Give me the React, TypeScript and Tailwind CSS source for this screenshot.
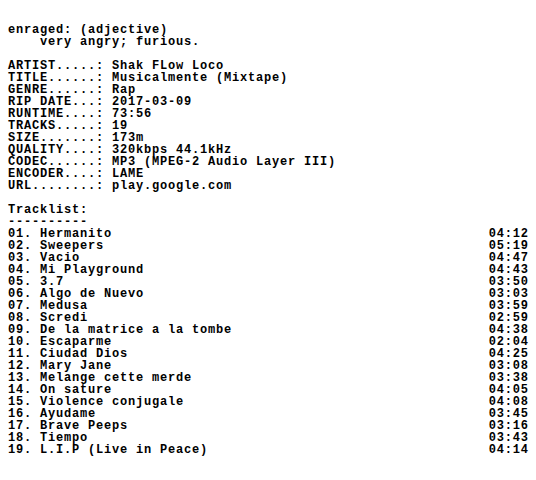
const definition = ["enraged: (adjective)", "    very angry; furious."];

const info: [string, string][] = [
  ["ARTIST.....", "Shak FLow Loco"],
  ["TITLE......", "Musicalmente (Mixtape)"],
  ["GENRE......", "Rap"],
  ["RIP DATE...", "2017-03-09"],
  ["RUNTIME....", "73:56"],
  ["TRACKS.....", "19"],
  ["SIZE.......", "173m"],
  ["QUALITY....", "320kbps 44.1kHz"],
  ["CODEC......", "MP3 (MPEG-2 Audio Layer III)"],
  ["ENCODER....", "LAME"],
  ["URL........", "play.google.com"],
];

const tracks: [string, string][] = [
  ["Hermanito", "04:12"],
  ["Sweepers", "05:19"],
  ["Vacio", "04:47"],
  ["Mi Playground", "04:43"],
  ["3.7", "03:50"],
  ["Algo de Nuevo", "03:03"],
  ["Medusa", "03:59"],
  ["Scredi", "02:59"],
  ["De la matrice a la tombe", "04:38"],
  ["Escaparme", "02:04"],
  ["Ciudad Dios", "04:25"],
  ["Mary Jane", "03:08"],
  ["Melange cette merde", "03:38"],
  ["On sature", "04:05"],
  ["Violence conjugale", "04:08"],
  ["Ayudame", "03:45"],
  ["Brave Peeps", "03:16"],
  ["Tiempo", "03:43"],
  ["L.I.P (Live in Peace)", "04:14"],
];

export default function App() {
  return (
    <div className="min-h-[480px] w-[536px] bg-white px-2 pt-6 font-['Liberation_Mono',monospace] text-[12px] leading-[12px] tracking-[0.8px] font-bold text-black whitespace-pre">
      {definition.map((line) => (
        <div key={line} className="h-3">{line}</div>
      ))}
      <div className="h-3" />
      {info.map(([key, value]) => (
        <div key={key} className="h-3">
          {key}: {value}
        </div>
      ))}
      <div className="h-3" />
      <div className="h-3">Tracklist:</div>
      <div className="h-3">----------</div>
      {tracks.map(([name, time], i) => (
        <div key={name} className="flex h-3 justify-between">
          <span>
            {String(i + 1).padStart(2, "0")}. {name}
          </span>
          <span className="-mr-[0.8px]">{time}</span>
        </div>
      ))}
    </div>
  );
}
